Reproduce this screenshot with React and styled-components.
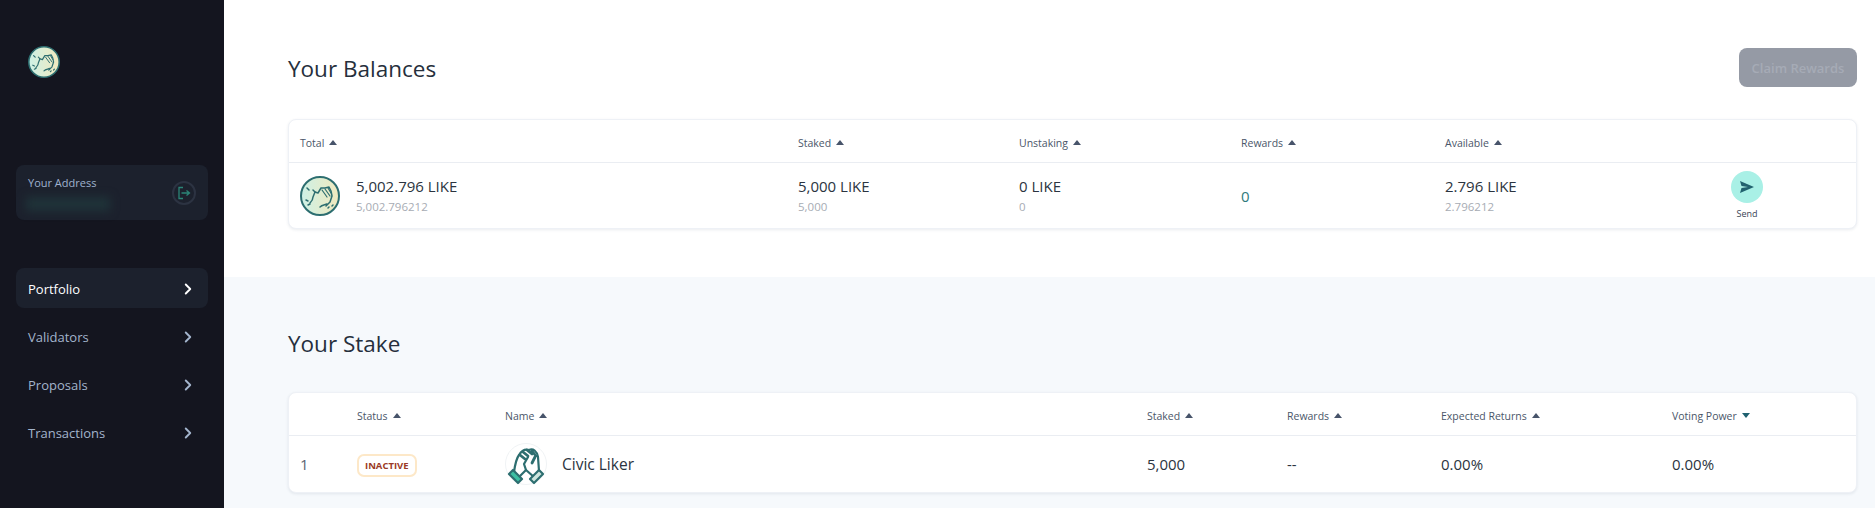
import styled, { createGlobalStyle } from "styled-components";
import { ChevronRight } from "lucide-react";

const GlobalStyle = createGlobalStyle`
  html, body {
    margin: 0;
    padding: 0;
    height: 100%;
    overflow: hidden;
    background: #fff;
    font-family: "Open Sans", "Noto Sans", sans-serif;
  }
`;

const Page = styled.div`
  display: flex;
  height: 100vh;
`;

const Sidebar = styled.aside`
  width: 224px;
  flex: none;
  box-sizing: border-box;
  padding: 46px 16px 0;
  background: #14151f;
`;

const LogoWrap = styled.div`
  height: 32px;
  padding-left: 12px;
  margin-bottom: 87px;
`;

const AddressCard = styled.div`
  position: relative;
  height: 55px;
  box-sizing: border-box;
  padding: 10px 12px;
  border-radius: 8px;
  background: #1c212d;
  margin-bottom: 48px;
`;

const AddressLabel = styled.div`
  font-size: 11px;
  line-height: 16px;
  color: #9fb2cf;
`;

const BlurredAddress = styled.div`
  position: absolute;
  left: 10px;
  top: 32px;
  width: 84px;
  height: 14px;
  background: #1f3339;
  filter: blur(5px);
`;

const LogoutButton = styled.div`
  position: absolute;
  right: 12px;
  top: 16px;
  width: 24px;
  height: 24px;
  box-sizing: border-box;
  border: 2px solid #2c3342;
  border-radius: 50%;
  display: flex;
  align-items: center;
  justify-content: center;
`;

const NavList = styled.nav`
  display: flex;
  flex-direction: column;
  gap: 8px;
`;

const NavItem = styled.a`
  display: flex;
  align-items: center;
  justify-content: space-between;
  height: 40px;
  box-sizing: border-box;
  padding: 2px 11px 0 12px;
  border-radius: 8px;
  font-size: 13px;
  color: ${({ $active }) => ($active ? "#ffffff" : "#a3b4cc")};
  background: ${({ $active }) => ($active ? "#1c212d" : "transparent")};
`;

const Main = styled.main`
  flex: 1;
  min-width: 0;
  display: flex;
  flex-direction: column;
`;

const Section = styled.section`
  padding: 48px 18px ${({ $tinted }) => ($tinted ? 0 : 48)}px 64px;
  background: ${({ $tinted }) => ($tinted ? "#f6f9fc" : "#ffffff")};
  flex: ${({ $tinted }) => ($tinted ? 1 : "none")};
`;

const SectionHeader = styled.div`
  display: flex;
  align-items: center;
  justify-content: space-between;
  height: ${({ $short }) => ($short ? 35 : 39)}px;
  margin-bottom: 32px;
`;

const Title = styled.h2`
  margin: 2px 0 0;
  font-size: 22.5px;
  font-weight: 500;
  color: #262f3c;
`;

const ClaimButton = styled.button`
  width: 118px;
  height: 39px;
  padding: 0;
  border: 0;
  border-radius: 8px;
  background: #959aa5;
  color: #a6abb6;
  font: 600 13px "Open Sans", sans-serif;
`;

const Card = styled.div`
  background: #fff;
  border: 1px solid #eef1f6;
  border-radius: 8px;
  box-shadow: 0 1px 3px rgba(45, 65, 95, 0.1);
`;

const Row = styled.div`
  display: grid;
  grid-template-columns: ${({ $columns }) => $columns};
  align-items: center;
  padding-left: 11px;
  height: ${({ $height }) => $height}px;
  box-sizing: border-box;
`;

const HeadRow = styled(Row)`
  padding-top: 3px;
  border-bottom: 1px solid #eaedf2;
`;

const HeadCell = styled.div`
  display: flex;
  align-items: center;
  gap: 5px;
  font-size: 10.5px;
  color: #4a5669;
`;

const Caret = styled.span`
  width: 0;
  height: 0;
  border-left: 4.5px solid transparent;
  border-right: 4.5px solid transparent;
  border-bottom: ${({ $down }) => ($down ? "0" : "5px solid #47546a")};
  border-top: ${({ $down }) => ($down ? "5px solid #1f6170" : "0")};
`;

const TotalCell = styled.div`
  display: flex;
  align-items: center;
  gap: 16px;
`;

const Amount = styled.div`
  font-size: 15px;
  line-height: 20px;
  color: #2b3440;
`;

const SubAmount = styled.div`
  margin-top: 3px;
  font-size: 11.5px;
  line-height: 16px;
  color: #a7acb4;
`;

const RewardValue = styled.div`
  font-size: 15px;
  color: #2f7a7c;
`;

const SendCell = styled.div`
  display: flex;
  flex-direction: column;
  align-items: center;
  gap: 5px;
  width: 60px;
`;

const SendCircle = styled.div`
  width: 32px;
  height: 32px;
  border-radius: 50%;
  background: #a9f0e6;
  display: flex;
  align-items: center;
  justify-content: center;
`;

const SendLabel = styled.div`
  font-size: 9px;
  line-height: 12px;
  color: #3a4556;
`;

const CellText = styled.div`
  font-size: 15px;
  color: ${({ $muted }) => ($muted ? "#5b6472" : "#2b3440")};
`;

const StatusBadge = styled.span`
  display: inline-block;
  box-sizing: border-box;
  height: 23px;
  line-height: 19px;
  padding: 0 6px;
  border: 2px solid #fde8c8;
  border-radius: 7px;
  font-size: 9.5px;
  font-weight: 700;
  color: #9b3a26;
`;

const NameCell = styled.div`
  display: flex;
  align-items: center;
  gap: 15px;
  font-size: 15.5px;
  font-weight: 500;
  color: #2b3440;
`;

function ClapLogo({ size }) {
  return (
    <svg width={size} height={size} viewBox="0 0 40 40">
      <defs>
        <linearGradient id={`clap${size}`} x1="0" x2="1" y1="0" y2="0">
          <stop offset="0" stopColor="#cdf1e6" />
          <stop offset="1" stopColor="#f1e9be" />
        </linearGradient>
      </defs>
      <circle cx="20" cy="20" r="19" fill={`url(#clap${size})`} stroke="#2d6e70" strokeWidth="2" />
      <g fill="none" stroke="#2d6e70" strokeWidth="1.5" strokeLinecap="round" strokeLinejoin="round">
        <path d="M10 27c2-2 3-4 3-6l2-5 3 1 3-5 4 0 4-1 2 4 1 5-2 6-4 4" />
        <path d="M20 31c2-2 5-2 7-3" />
        <path d="M15 16l-2-2M7 12l2 2M6 24l2 1M8 29l2-1M28 32l1-1M32 30l1-1" />
        <path d="M22 14l5 7M25 13l5 7M28 12l3 5" strokeWidth="1.2" />
      </g>
    </svg>
  );
}

function ShakeLogo() {
  return (
    <svg width="42" height="42" viewBox="0 0 42 42">
      <circle cx="21" cy="21" r="20.5" fill="#fff" stroke="#f0f3f5" />
      <g stroke="#2d6e70" strokeWidth="2.2" strokeLinecap="round" strokeLinejoin="round">
        <path d="M9 29C10 22 11 16 14 12 17 7 21 6 24 7 28 5 32 8 33 14L34 28 29 34 21 27 14 34z" fill="#fff" />
        <path d="M4 31l4-4 9 9-4 4z" fill="#3cbfa2" />
        <path d="M38 31l-4-4-9 9 4 4z" fill="#cfe6df" />
        <path d="M21 27l-2-6 4-7" fill="none" />
        <path d="M15 12l5 4M18 9l5 4M22 7l5 4M27 8l4 5M30 14l-3 6" fill="none" strokeWidth="2.8" />
      </g>
    </svg>
  );
}

const BALANCE_COLUMNS = "498px 221px 222px 204px 272px 1fr";
const STAKE_COLUMNS = "57px 148px 642px 140px 154px 231px 1fr";

const NAV_ITEMS = ["Portfolio", "Validators", "Proposals", "Transactions"];

const BALANCE_HEADS = ["Total", "Staked", "Unstaking", "Rewards", "Available"];
const STAKE_HEADS = ["Status", "Name", "Staked", "Rewards", "Expected Returns", "Voting Power"];

function App() {
  return (
    <Page>
      <GlobalStyle />
      <Sidebar>
        <LogoWrap>
          <ClapLogo size={32} />
        </LogoWrap>
        <AddressCard>
          <AddressLabel>Your Address</AddressLabel>
          <BlurredAddress />
          <LogoutButton>
            <svg width="14" height="14" viewBox="0 0 14 14" fill="none" stroke="#2b8577" strokeWidth="1.3">
              <path d="M6 1.5H2v11h4" />
              <path d="M4.5 7H12M9.5 4.5L12.5 7l-3 2.5" />
            </svg>
          </LogoutButton>
        </AddressCard>
        <NavList>
          {NAV_ITEMS.map((item, i) => (
            <NavItem key={item} $active={i === 0}>
              {item}
              <ChevronRight size={18} strokeWidth={2.5} color={i === 0 ? "#ffffff" : "#a3b4cc"} />
            </NavItem>
          ))}
        </NavList>
      </Sidebar>
      <Main>
        <Section>
          <SectionHeader>
            <Title>Your Balances</Title>
            <ClaimButton>Claim Rewards</ClaimButton>
          </SectionHeader>
          <Card>
            <HeadRow $columns={BALANCE_COLUMNS} $height={43}>
              {BALANCE_HEADS.map((head) => (
                <HeadCell key={head}>
                  {head}
                  <Caret />
                </HeadCell>
              ))}
            </HeadRow>
            <Row $columns={BALANCE_COLUMNS} $height={65}>
              <TotalCell>
                <ClapLogo size={40} />
                <div>
                  <Amount>5,002.796 LIKE</Amount>
                  <SubAmount>5,002.796212</SubAmount>
                </div>
              </TotalCell>
              <div>
                <Amount>5,000 LIKE</Amount>
                <SubAmount>5,000</SubAmount>
              </div>
              <div>
                <Amount>0 LIKE</Amount>
                <SubAmount>0</SubAmount>
              </div>
              <RewardValue>0</RewardValue>
              <div>
                <Amount>2.796 LIKE</Amount>
                <SubAmount>2.796212</SubAmount>
              </div>
              <SendCell>
                <SendCircle>
                  <svg width="14" height="12" viewBox="0 0 14 12">
                    <path d="M0 0l14 6-14 6 1.5-5L8 6 1.5 5z" fill="#21626f" />
                  </svg>
                </SendCircle>
                <SendLabel>Send</SendLabel>
              </SendCell>
            </Row>
          </Card>
        </Section>
        <Section $tinted>
          <SectionHeader $short>
            <Title>Your Stake</Title>
          </SectionHeader>
          <Card>
            <HeadRow $columns={STAKE_COLUMNS} $height={43}>
              <span />
              {STAKE_HEADS.map((head) => (
                <HeadCell key={head}>
                  {head}
                  <Caret $down={head === "Voting Power"} />
                </HeadCell>
              ))}
            </HeadRow>
            <Row $columns={STAKE_COLUMNS} $height={56}>
              <CellText $muted>1</CellText>
              <div>
                <StatusBadge>INACTIVE</StatusBadge>
              </div>
              <NameCell>
                <ShakeLogo />
                Civic Liker
              </NameCell>
              <CellText>5,000</CellText>
              <CellText>--</CellText>
              <CellText>0.00%</CellText>
              <CellText>0.00%</CellText>
            </Row>
          </Card>
        </Section>
      </Main>
    </Page>
  );
}

export default App;
